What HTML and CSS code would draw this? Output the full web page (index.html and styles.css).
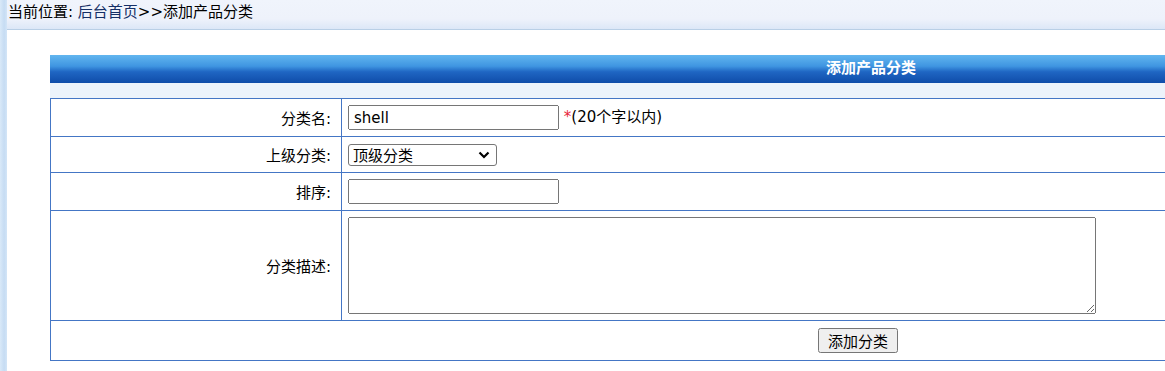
FILE: index.html
```
<!DOCTYPE html>
<html>

<head>
    <title>添加产品分类</title>
    <link rel="stylesheet" href="styles.css">
</head>

<body>
    <div class="side"></div>
    <div class="main">
        <div class="crumb">当前位置: <a href="#">后台首页</a>&gt;&gt;添加产品分类</div>

        <div class="box">
            <div class="box-title">添加产品分类</div>
            <div class="box-sub"></div>
            <table class="form">
                <tr class="r1">
                    <td class="label">分类名:</td>
                    <td><input type="text" class="txt" value="shell"> <span class="star">*</span>(20个字以内)</td>
                </tr>
                <tr class="r2">
                    <td class="label">上级分类:</td>
                    <td>
                        <span class="sel-wrap">
                            <select class="sel">
                                <option>顶级分类</option>
                            </select>
                            <svg class="sel-arrow" width="12" height="8" viewBox="0 0 12 8">
                                <path d="M1.5 1.5 L6 6 L10.5 1.5" fill="none" stroke="#000" stroke-width="2.2" />
                            </svg>
                        </span>
                    </td>
                </tr>
                <tr class="r3">
                    <td class="label">排序:</td>
                    <td><input type="text" class="txt"></td>
                </tr>
                <tr class="r4">
                    <td class="label">分类描述:</td>
                    <td><textarea class="desc"></textarea></td>
                </tr>
                <tr class="r5">
                    <td colspan="2" class="submit"><button>添加分类</button></td>
                </tr>
            </table>
        </div>
    </div>
</body>

</html>
```

FILE: styles.css
```
html, body {
    margin: 0;
    height: 100%;
    overflow: hidden;
}

body {
    display: flex;
    font-family: "DejaVu Sans", "Noto Sans CJK SC", sans-serif;
    font-size: 15px;
    color: #000;
    background: #fff;
}

.side {
    width: 7px;
    flex-shrink: 0;
    background: linear-gradient(to right, #d9e9f8, #c6dcf3 60%, #d3e5f7);
}

.main {
    flex: 1;
    min-width: 0;
}

.crumb {
    height: 29px;
    line-height: 25px;
    padding-left: 1px;
    background: linear-gradient(#f0f4fc, #eef2fb 65%, #dce7f7);
    border-bottom: 1px solid #b9cfe6;
    white-space: nowrap;
}

.crumb a {
    color: #142f66;
    text-decoration: none;
}

.box {
    width: 1642px;
    margin: 25px 0 0 43px;
}

.box-title {
    height: 28px;
    line-height: 27px;
    text-align: center;
    color: #fff;
    font-weight: bold;
    background: linear-gradient(#62b6ef, #3f95e1 40%, #1f66c3 60%, #0f4ca9);
}

.box-sub {
    height: 15px;
    background: #ecf3fb;
}

.form {
    width: 100%;
    border-collapse: collapse;
}

.form td {
    border: 1px solid #4476c5;
    padding: 0 6px;
    vertical-align: middle;
}

.form .label {
    width: 276px;
    text-align: right;
    padding-right: 10px;
    padding-left: 4px;
}

.r1 td { height: 37px; }
.r2 td { height: 35px; }
.r3 td { height: 37px; }
.r4 td { height: 109px; }
.r5 td { height: 39px; }

.txt {
    width: 211px;
    height: 25px;
    box-sizing: border-box;
    font-family: "DejaVu Sans", "Noto Sans CJK SC", sans-serif;
    font-size: 15px;
    padding: 0 4px;
    vertical-align: middle;
}

.star {
    color: #e8253a;
}

.sel-wrap {
    position: relative;
    display: inline-block;
    vertical-align: middle;
}

.sel {
    display: block;
    width: 149px;
    height: 22px;
    padding: 0 4px;
    appearance: none;
    background: #fff;
    border: 1px solid #767676;
    border-radius: 3px;
    font-family: "Noto Sans CJK SC", sans-serif;
    font-size: 15px;
    line-height: 20px;
    color: #000;
}

.sel-arrow {
    position: absolute;
    right: 7px;
    top: 7px;
    pointer-events: none;
}

.desc {
    display: block;
    width: 748px;
    height: 97px;
    box-sizing: border-box;
    font-family: "DejaVu Sans", "Noto Sans CJK SC", sans-serif;
}

.submit {
    padding-left: 767px !important;
}

.submit button {
    height: 25px;
    padding: 0 8px;
    font-family: "Noto Sans CJK SC", sans-serif;
    font-size: 15px;
    line-height: 1;
}
```
